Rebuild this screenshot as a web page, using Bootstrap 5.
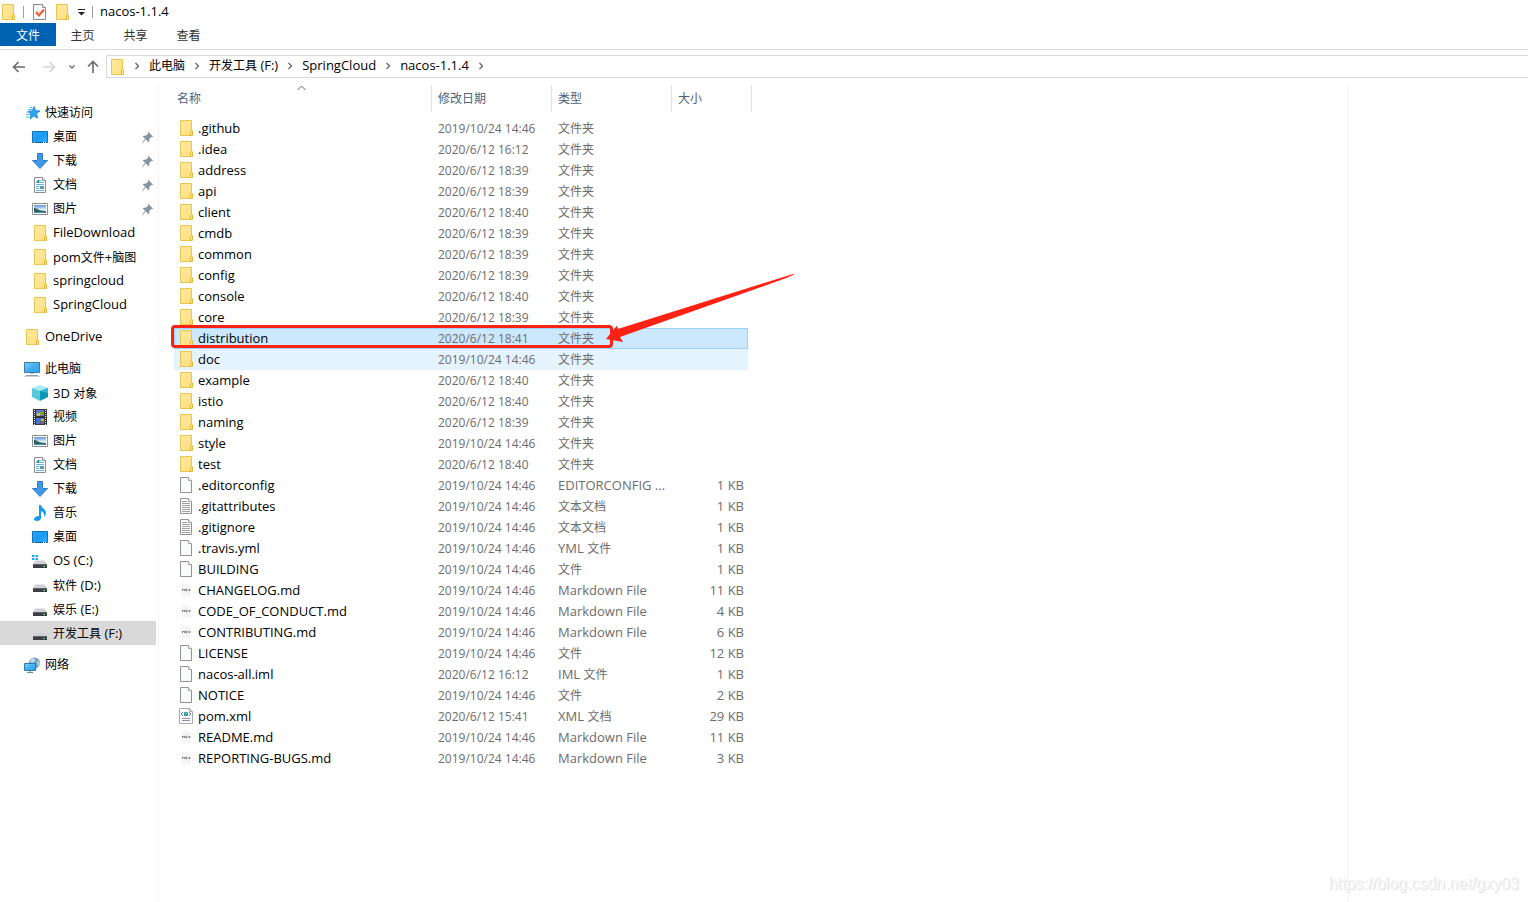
<!DOCTYPE html>
<html lang="zh-CN">
<head>
<meta charset="utf-8">
<meta name="viewport" content="width=device-width, initial-scale=1">
<title>nacos-1.1.4</title>
<link href="https://cdn.jsdelivr.net/npm/bootstrap@5.3.0/dist/css/bootstrap.min.css" rel="stylesheet">
<style>
  body { font-family: "Open Sans", "Noto Sans CJK SC", sans-serif; font-size: 12px; line-height: 20px; color: #000; background: #fff; overflow: hidden; }
  .latin { font-size: 13px; }
  .ico { width: 16px; height: 16px; flex: none; display: block; }
  a { color: inherit; text-decoration: none; }
  .plain { border: 0; background: none; padding: 0; color: inherit; display: block; }
  .title-row { height: 23px; gap: 7px; }
  .title-row .latin { padding-bottom: 2px; }
  .rule { width: 1px; height: 12px; background: #a0a0a0; }
  .ribbon { height: 27px; border-bottom: 1px solid #dadbdc; }
  .ribbon .nav-link { height: 23px; width: 53px; padding: 3px 0 0; text-align: center; color: #333; border-radius: 0; }
  .ribbon .nav-link.active { width: 56px; background: #0063b1; color: #fff; }
  .address-row { padding: 5px 0 7px; }
  .nav-buttons { width: 106px; padding-left: 11px; }
  .path-box { height: 23px; border: 1px solid #d9d9d9; border-right: 0; padding-left: 2px; }
  .path-box ol { list-style: none; padding: 0 0 2px; margin: 0; }
  .step { width: 24px; display: flex; justify-content: center; }
  .tree { width: 159px; border-right: 1px solid #f3f3f3; padding-top: 16px; min-height: calc(100vh - 85px); }
  .tree .entry { height: 24px; width: 156px; padding: 0 3px 0 32px; gap: 5px; }
  .tree .entry.root { padding-left: 24px; }
  .tree .entry.current { background: #d9d9d9; }
  .tree .entry > .latin-only { padding-bottom: 2px; }
  .tree ul + ul { margin-top: 8px; }
  .files { position: relative; width: 578px; margin-left: 15px; }
  .files table { width: 578px; table-layout: fixed; border-collapse: separate; border-spacing: 0; }
  .files th { height: 27px; font-weight: 400; color: #4c607a; border-right: 1px solid #e2e2e2; padding: 0 0 0 6px; position: relative; }
  .files th:first-child { padding-left: 3px; }
  .sort-mark { position: absolute; left: 123px; top: 0; }
  .files td { height: 21px; padding: 0 0 0 6px; color: #6d6d6d; line-height: 19px; white-space: nowrap; border: solid transparent; border-width: 1px 0; }
  .files td:first-child { color: #000; padding-left: 4px; }
  .files td .ico { margin-bottom: 1px; }
  .files td:last-child { text-align: right; padding: 0 3px 0 0; border-right-width: 1px; }
  .files .gap td { height: 6px; padding: 0; border: 0; }
  .files .picked td { background: #cce8ff; border-color: #99d1ff; }
  .files .picked td:first-child { border-left-width: 1px; padding-left: 3px; }
  .files .hovered td { background: #e5f3ff; border-color: #e5f3ff; }
  .red-box { position: absolute; left: -3px; top: 240px; width: 442px; height: 23px; border: 3px solid #fe2214; border-radius: 4px; }
  .red-arrow { position: absolute; left: 426px; top: 185px; }
  .preview-edge { width: 181px; border-left: 1px solid #f3f3f3; }
  .site-mark { position: fixed; right: 9px; bottom: 6px; font: 16px/24px "Liberation Sans", sans-serif; color: #f6f6f6; text-shadow: 1px 1px 1px #ddd; }
</style>
</head>
<body>
<svg width="0" height="0" class="position-absolute" aria-hidden="true">
  <defs>
    <linearGradient id="gFold" x2="1" y2="1"><stop stop-color="#ffe9a2"/><stop offset="1" stop-color="#ffdf7e"/></linearGradient>
    <linearGradient id="gScr" x2="1" y2="1"><stop stop-color="#2aa5ff"/><stop offset=".5" stop-color="#1b9bfa"/><stop offset="1" stop-color="#35b0ff"/></linearGradient>
    <linearGradient id="gSky" x2="0" y2="1"><stop stop-color="#5b95dc"/><stop offset=".6" stop-color="#e6f1fb"/></linearGradient>
    <linearGradient id="gMon" x2="1" y2="1"><stop stop-color="#7fcdf9"/><stop offset=".5" stop-color="#44b0f2"/><stop offset="1" stop-color="#2f9fe8"/></linearGradient>
  </defs>
  <symbol id="folder" viewBox="0 0 16 16"><path d="M2.5.5h11v15h-11z" fill="url(#gFold)" stroke="#eac54f"/><path d="M12.500 15.500v-4l1-1.500 1 1v4.500z" fill="#ffe79b" stroke="#e3b93e"/></symbol>
  <symbol id="blank" viewBox="0 0 16 16"><path d="M2.500.5h8l3 3v12h-11z" fill="#fafbfb" stroke="#919191"/><path d="M10.500.5v3h3" fill="#fff" stroke="#a5a5a5"/></symbol>
  <symbol id="text" viewBox="0 0 16 16"><use href="#blank"/><path d="M4 3.500h5M4 5.500h8M4 7.500h8M4 9.500h8M4 11.500h8M4 13.500h8" stroke="#a2a2a2"/></symbol>
  <symbol id="check" viewBox="0 0 16 16"><path d="M2.500.5h9l3 3v12h-12z" fill="#f6f8fc" stroke="#8b8b8b"/><path d="M11.500.5v3h3" fill="#fff" stroke="#8b8b8b"/><path d="M5 8l3 3.500 5-6" fill="none" stroke="#f15a24" stroke-width="2"/></symbol>
  <symbol id="md" viewBox="0 0 16 16"><path d="M3 2h7l3 2v10l-9 1z" fill="#f5f5f5"/><path d="M4.500 9V7l1 1 1-1v2M8 9V7l1.200.5v1L8 9M10.500 8h2M11.500 7V9" fill="none" stroke="#777" stroke-width=".9"/></symbol>
  <symbol id="xml" viewBox="0 0 16 16"><path d="M1.500.5h10l3 3v12h-13z" fill="#fff" stroke="#a5abb0"/><path d="M11.500.5v3h3" fill="none" stroke="#a5abb0"/><path d="M5 4L3 6l2 2M11 4l2 2-2 2" fill="none" stroke="#567b9f"/><circle cx="8" cy="6" r="2.300" fill="#2292b4"/><circle cx="8" cy="5.500" r="1" fill="#84d45a"/><path d="M4 10.500h8M4 12.500h8" stroke="#8f8fb5"/></symbol>
  <symbol id="star" viewBox="0 0 16 16"><path d="M10 1.500l1.600 4.200 4.400.2-3.500 2.700 1.200 4.600L9.800 11 6 14l1-4.800-3.200-2.900 4.300-.3z" fill="#2ea3f2" stroke="#1580cf" stroke-width=".8"/><path d="M4 4.500h4M2.500 7h3M2 9.500h4M2 12h3M6 2.500h2" stroke="#54b4f5"/></symbol>
  <symbol id="desk" viewBox="0 0 16 16"><path d="M.5 2.500h15v11H.5z" fill="url(#gScr)" stroke="#1473b5"/><path d="M1 13.500h14" stroke="#0b5c9b"/><path d="M2 13.500h1M11 13.500h1M13 13.500h1" stroke="#fff"/></symbol>
  <symbol id="down" viewBox="0 0 16 16"><path d="M5.500.5h5v7h5L8 15.500.5 7.500h5z" fill="#3f98e6" stroke="#2c7cc7"/></symbol>
  <symbol id="doc" viewBox="0 0 16 16"><path d="M2.500.5h8l3 3v12h-11z" fill="#fff" stroke="#8c8c8c"/><path d="M10.500.5v3h3" fill="#eee" stroke="#8c8c8c"/><path d="M7 3.500h2M5 5.500h1M7 5.500h5M4 7.500h8M4 9.500h3M4 11.500h3M4 13.500h8" stroke="#69b0df"/><path d="M4.500 6L6.500 3v3" fill="none" stroke="#187fc4"/><path d="M8 9h4v3H8z" fill="#5b9a9d"/></symbol>
  <symbol id="pic" viewBox="0 0 16 16"><path d="M.5 2.500h15v11H.5z" fill="#fff" stroke="#8e8e8e"/><path d="M2 4h12v8H2z" fill="url(#gSky)"/><path d="M2 7c3 0 4 2 7 2.500l5 .5v2H2z" fill="#2f6658"/><path d="M2 11h12v1H2z" fill="#4d86b1"/></symbol>
  <symbol id="pc" viewBox="0 0 16 16"><path d="M.5 1.500h15v10H.5z" fill="url(#gMon)" stroke="#3b7ba5"/><path d="M6 12h4v1H6z" fill="#b2bcc5"/><path d="M2 14.500h12" stroke="#8ba0b0"/><path d="M0 15.500h16" stroke="#c6d0d8"/></symbol>
  <symbol id="cube" viewBox="0 0 16 16"><path d="M8 0l8 3-8 3-8-3z" fill="#a9ecf4"/><path d="M0 3l8 3v10l-8-4z" fill="#54c8dd"/><path d="M8 6l8-3v9l-8 4z" fill="#0b98b5"/><path d="M8 6l8-3v5z" fill="#2fb9d2"/></symbol>
  <symbol id="film" viewBox="0 0 16 16"><path d="M1 0h14v16H1z" fill="#333"/><path d="M4 1h8v6H4z" fill="#607ac9"/><path d="M4 9h8v6H4z" fill="#3a76d2"/><path d="M5 4h3v3H5zM9 10h3v2H9z" fill="#e2b62e"/><path d="M8 3h3v3H8z" fill="#7aab3a"/><path d="M8 12h2v3H8z" fill="#b3403c"/><path d="M2.500 1v15M13.500 1v15" stroke="#eee" stroke-dasharray="1 1"/></symbol>
  <symbol id="note" viewBox="0 0 16 16"><path d="M7 0h2c0 3 5 4 5 8 0 2-1 3-2 4 1-4-1-5-3-6v7c0 2-2 3-4 3s-3-1-3-2 2-3 5-3z" fill="#159af0"/></symbol>
  <symbol id="disk" viewBox="0 0 16 16"><path d="M3.500 7.500h9L15 11H1z" fill="#cfd2d5"/><path d="M1 11h14v4H1z" fill="#3c3f42"/><path d="M1 11.500h14" stroke="#606365"/><path d="M11 13h2v1h-2z" fill="#49e35a"/></symbol>
  <symbol id="osdisk" viewBox="0 0 16 16"><use href="#disk"/><path d="M0 2h2.500v2H0zM3.500 2h2.500v2H3.500zM0 5h2.500v2H0zM3.500 5h2.500v2H3.500z" fill="#14abf0"/></symbol>
  <symbol id="net" viewBox="0 0 16 16"><circle cx="10.500" cy="6" r="5.500" fill="#6e9fbd"/><path d="M7 2c3-2 5 0 4 2L9 6 6 5zM13 3l3 3-2 4z" fill="#b9d9e6"/><path d="M.5 6.500h11v7H.5z" fill="url(#gMon)" stroke="#2f79ab"/><path d="M3 15.500h6M6 14v1" stroke="#6c8ba0"/></symbol>
  <symbol id="pin" viewBox="0 0 11 11"><path d="M6.500 0L11 4.500l-1 .7-.8-.2-2 2.200.2 2-1 .8-2.600-2.600L.5 11 0 10.500l3.200-3.700L.8 4.500l1-1 2 .2L6 1.800 5.800.8z" fill="#8794a0"/></symbol>
  <symbol id="chev" viewBox="0 0 6 8"><path d="M1.500 1l3 3-3 3" fill="none" stroke="#666" stroke-width="1.300"/></symbol>
</svg>

<header>
  <div class="title-row d-flex align-items-center">
    <svg class="ico"><use href="#folder"/></svg>
    <span class="rule"></span>
    <button class="plain" aria-label="属性"><svg class="ico"><use href="#check"/></svg></button>
    <button class="plain" aria-label="新建文件夹"><svg class="ico"><use href="#folder"/></svg></button>
    <button class="plain" aria-label="自定义快速访问工具栏"><svg width="8" height="8" viewBox="0 0 8 8" class="d-block"><path d="M1 1.500h7" stroke="#222"/><path d="M1 4h7L4.500 7.500z" fill="#222"/></svg></button>
    <span class="rule"></span>
    <span class="latin">nacos-1.1.4</span>
  </div>
  <nav class="ribbon nav nav-pills">
    <a class="nav-link active" href="#">文件</a>
    <a class="nav-link" href="#">主页</a>
    <a class="nav-link" href="#">共享</a>
    <a class="nav-link" href="#">查看</a>
  </nav>
  <div class="address-row d-flex">
    <div class="nav-buttons d-flex align-items-center">
      <button class="plain" aria-label="后退"><svg class="ico" viewBox="0 0 16 16"><path d="M2.500 8H14M7.500 3l-5 5 5 5" fill="none" stroke="#6a6a6a" stroke-width="1.600"/></svg></button>
      <button class="plain ms-3" aria-label="前进" disabled><svg class="ico" viewBox="0 0 16 16"><path d="M0 8h11.500M6.500 3l5 5-5 5" fill="none" stroke="#d6d6d6" stroke-width="1.600"/></svg></button>
      <button class="plain ms-2" aria-label="最近浏览的位置"><svg width="10" height="8" viewBox="0 0 10 8" class="d-block"><path d="M2.500 2.500l2.500 2.500 2.500-2.500" fill="none" stroke="#777" stroke-width="1.500"/></svg></button>
      <button class="plain ms-2" aria-label="上移"><svg class="ico" viewBox="0 0 16 16"><path d="M8 2.500V14M3 7.500l5-5 5 5" fill="none" stroke="#6a6a6a" stroke-width="1.600"/></svg></button>
    </div>
    <div class="path-box d-flex align-items-center flex-grow-1">
      <svg class="ico"><use href="#folder"/></svg>
      <ol class="d-flex align-items-center" id="path"></ol>
    </div>
  </div>
</header>

<main class="d-flex">
  <nav class="tree flex-shrink-0" id="tree" aria-label="导航窗格"></nav>
  <section class="files flex-shrink-0">
    <table>
      <colgroup><col style="width:258px"><col style="width:120px"><col style="width:120px"><col style="width:76px"><col style="width:4px"></colgroup>
      <thead><tr>
        <th scope="col">名称<svg class="sort-mark" width="9" height="6" viewBox="0 0 9 6"><path d="M.5 5l4-4 4 4" fill="none" stroke="#666"/></svg></th>
        <th scope="col">修改日期</th><th scope="col">类型</th><th scope="col" colspan="2">大小</th>
      </tr></thead>
      <tbody id="rows"></tbody>
    </table>
    <div class="red-box"></div>
    <svg class="red-arrow" width="200" height="80" viewBox="0 0 200 80"><path d="M6 69L17 55.500l.8 3.500L193 4l1.300.5L187 7.800 20 67l3 5z" fill="#fe2214"/></svg>
  </section>
  <div class="preview-edge ms-auto"></div>
</main>
<div class="site-mark">https://blog.csdn.net/gxy03</div>

<script>
  const hasHan = s => /[\u4e00-\u9fff]/.test(s);
  // Western runs are set one size larger than the Chinese around them
  const label = s => s.replace(/[^\u4e00-\u9fff]+/g, '<span class="latin">$&</span>');
  const icon = n => `<svg class="ico"><use href="#${n}"/></svg>`;

  const chevron = '<span class="step"><svg width="6" height="8"><use href="#chev"/></svg></span>';
  document.getElementById('path').innerHTML =
    ['此电脑', '开发工具 (F:)', 'SpringCloud', 'nacos-1.1.4']
      .map(s => `<li class="d-flex align-items-center">${chevron}<a href="#">${label(s)}</a></li>`).join('') +
    `<li>${chevron}</li>`;

  const groups = [
    [['star', '快速访问'], ['desk', '桌面', 1], ['down', '下载', 1], ['doc', '文档', 1], ['pic', '图片', 1],
     ['folder', 'FileDownload'], ['folder', 'pom文件+脑图'], ['folder', 'springcloud'], ['folder', 'SpringCloud']],
    [['folder', 'OneDrive']],
    [['pc', '此电脑'], ['cube', '3D 对象'], ['film', '视频'], ['pic', '图片'], ['doc', '文档'], ['down', '下载'], ['note', '音乐'],
     ['desk', '桌面'], ['osdisk', 'OS (C:)'], ['disk', '软件 (D:)'], ['disk', '娱乐 (E:)'], ['disk', '开发工具 (F:)']],
    [['net', '网络']]
  ];
  document.getElementById('tree').innerHTML = groups.map(g => '<ul class="list-unstyled mb-0">' + g.map(([i, s, pin], n) =>
    `<li><a href="#" class="entry d-flex align-items-center ${n ? '' : 'root'} ${s === '开发工具 (F:)' ? 'current' : ''}">${icon(i)}` +
    `<span class="${hasHan(s) ? '' : 'latin-only'}">${label(s)}</span>` +
    (pin ? '<svg class="ms-auto" width="11" height="11"><use href="#pin"/></svg>' : '') + '</a></li>').join('') + '</ul>').join('');

  const A = '2019/10/24 14:46', B = '2020/6/12 ', D = '文件夹', M = 'Markdown File';
  const files = [
    ['folder', '.github', A, D], ['folder', '.idea', B + '16:12', D], ['folder', 'address', B + '18:39', D],
    ['folder', 'api', B + '18:39', D], ['folder', 'client', B + '18:40', D], ['folder', 'cmdb', B + '18:39', D],
    ['folder', 'common', B + '18:39', D], ['folder', 'config', B + '18:39', D], ['folder', 'console', B + '18:40', D],
    ['folder', 'core', B + '18:39', D], ['folder', 'distribution', B + '18:41', D], ['folder', 'doc', A, D],
    ['folder', 'example', B + '18:40', D], ['folder', 'istio', B + '18:40', D], ['folder', 'naming', B + '18:39', D],
    ['folder', 'style', A, D], ['folder', 'test', B + '18:40', D],
    ['blank', '.editorconfig', A, 'EDITORCONFIG ...', 1], ['text', '.gitattributes', A, '文本文档', 1],
    ['text', '.gitignore', A, '文本文档', 1], ['blank', '.travis.yml', A, 'YML 文件', 1], ['blank', 'BUILDING', A, '文件', 1],
    ['md', 'CHANGELOG.md', A, M, 11], ['md', 'CODE_OF_CONDUCT.md', A, M, 4], ['md', 'CONTRIBUTING.md', A, M, 6],
    ['blank', 'LICENSE', A, '文件', 12], ['blank', 'nacos-all.iml', B + '16:12', 'IML 文件', 1], ['blank', 'NOTICE', A, '文件', 2],
    ['xml', 'pom.xml', B + '15:41', 'XML 文档', 29], ['md', 'README.md', A, M, 11], ['md', 'REPORTING-BUGS.md', A, M, 3]
  ];
  const state = { distribution: 'picked', doc: 'hovered' };
  document.getElementById('rows').innerHTML = '<tr class="gap"><td colspan="4"></td></tr>' + files.map(([i, n, d, t, k]) =>
    `<tr class="${state[n] || ''}"><td><div class="d-flex align-items-center gap-1">${icon(i)}<span class="latin">${n}</span></div></td>` +
    `<td>${d}</td><td>${label(t)}</td><td class="latin">${k ? k + ' KB' : ''}</td></tr>`).join('');
</script>
<script src="https://cdn.jsdelivr.net/npm/bootstrap@5.3.0/dist/js/bootstrap.bundle.min.js"></script>
</body>
</html>
